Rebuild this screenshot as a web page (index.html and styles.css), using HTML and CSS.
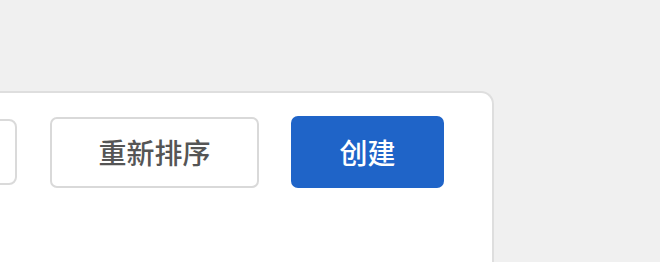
FILE: index.html
```html
<!DOCTYPE html>
<html lang="zh">
<head>
<meta charset="utf-8">
<link rel="stylesheet" href="styles.css">
</head>
<body>
<div class="card">
  <div class="actions">
    <div class="field"></div>
    <button class="btn btn-default">重新排序</button>
    <button class="btn btn-primary">创建</button>
  </div>
</div>
</body>
</html>
```

FILE: styles.css
```css
* { box-sizing: border-box; }
html, body {
  margin: 0;
  padding: 0;
  background: #f0f0f0;
  width: 660px;
  height: 262px;
  overflow: hidden;
  font-family: "Noto Sans CJK SC", "Noto Sans", sans-serif;
}
.card {
  margin-top: 91px;
  margin-left: -60px;
  width: 554px;
  height: 171px;
  background: #ffffff;
  border: 2px solid #dedede;
  border-bottom: none;
  border-radius: 13px 13px 0 0;
}
.actions {
  display: flex;
  align-items: center;
  gap: 32px;
  padding-top: 23px;
  padding-right: 48px;
  justify-content: flex-end;
}
.field {
  width: 60px;
  height: 66px;
  border: 2px solid #dadada;
  border-radius: 8px;
  margin-right: 1px;
}
.btn {
  height: 72px;
  font-family: inherit;
  font-size: 28px;
  font-weight: 500;
  border-radius: 7px;
  padding: 0 46px;
  cursor: pointer;
  line-height: 1;
}
.btn-default {
  width: 209px;
  height: 71px;
  background: #ffffff;
  color: #555555;
  border: 2px solid #d9d9d9;
}
.btn-primary {
  width: 153px;
  background: #1f64c8;
  color: #ffffff;
  border: none;
}
```
